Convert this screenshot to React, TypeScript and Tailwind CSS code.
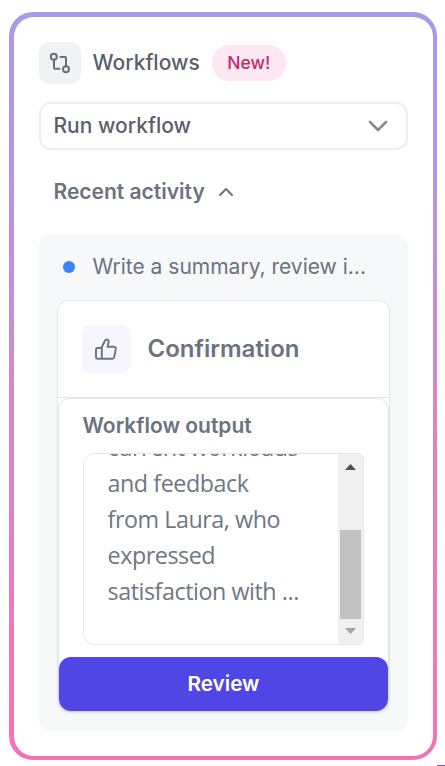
import React from 'react';
import { ChevronDown, ChevronUp } from 'lucide-react';

const WorkflowIcon = () => (
  <svg className="w-[22px] h-[22px]" viewBox="0 0 22 22" fill="none" stroke="#687080" strokeWidth="2" strokeLinecap="round" strokeLinejoin="round">
    <circle cx="4.8" cy="4.8" r="3" />
    <circle cx="17" cy="17.2" r="3" />
    <path d="M5 8v7.700a1 1 0 0 0 1 1h4.500" />
    <path d="M11.500 5H16a1 1 0 0 1 1 1v8" />
  </svg>
);

const ThumbIcon = () => (
  <svg className="w-6 h-6" viewBox="0 0 24 24" fill="none" stroke="#6b7280" strokeWidth="1.9" strokeLinecap="round" strokeLinejoin="round">
    <path d="M7.800 11v10.700H3.500a1.500 1.500 0 0 1-1.500-1.500v-7.700a1.500 1.500 0 0 1 1.500-1.500h2.800a1.500 1.500 0 0 0 1.500-1L11 3.800a1.900 1.900 0 0 1 3.600 1.200l-1 4.700h6.200a2 2 0 0 1 2 2.400l-1.600 8a2 2 0 0 1-2 1.600H7.800" />
  </svg>
);

const Scrollbar = () => (
  <div className="w-[25px] shrink-0 flex flex-col items-center bg-[#f0f0f0]">
    <svg className="w-[11px] h-[6px] mt-[10px]" viewBox="0 0 11 6">
      <path d="M5.500 0L11 6H0z" fill="#505050" />
    </svg>
    <div className="w-[21px] h-[89px] mt-[60px] bg-[#c1c1c1]" />
    <svg className="w-[11px] h-[6px] mt-[9px]" viewBox="0 0 11 6">
      <path d="M0 0h11L5.500 6z" fill="#a3a3a3" />
    </svg>
  </div>
);

const outputLines = ['current workloads', 'and feedback', 'from Laura, who', 'expressed', 'satisfaction with ...'];

const OutputBox = () => (
  <div className="w-[281px] h-[192px] mt-[12px] ml-[24px] flex justify-between border border-[#e5e7eb] rounded-l-[12px] rounded-r-[6px] overflow-hidden">
    <div className="-mt-[25px] pl-[23.500px] whitespace-nowrap font-['Open_Sans','Noto_Sans',sans-serif] text-[23.300px] leading-[36px] tracking-[-0.45px] text-[#6f7785]">
      {outputLines.map((line) => (
        <p key={line}>{line}</p>
      ))}
    </div>
    <Scrollbar />
  </div>
);

const ActivityCard = () => (
  <div className="w-[333px] mt-[18px] ml-[18px] bg-white border border-[#e5e7eb] rounded-[12px] shadow-xs">
    <div className="h-[97px] flex items-center pl-6 border-b border-[#e5e7eb]">
      <div className="w-12 h-12 flex items-center justify-center rounded-lg bg-[#f5f6ff]">
        <ThumbIcon />
      </div>
      <h3 className="ml-[17.500px] text-[24px] leading-8 font-semibold text-[#6b7280]">Confirmation</h3>
    </div>
    <div className="border-x border-t border-[#e5e7eb] rounded-[12px]">
      <h4 className="mt-[12px] mb-px ml-[23.500px] text-[21px] leading-[30px] font-semibold text-[#6b7280]">Workflow output</h4>
      <OutputBox />
      <button className="block w-full h-[54px] mt-[12px] rounded-[12px] bg-[#4f46e5] text-[20.700px] font-semibold text-white shadow-sm">Review</button>
    </div>
  </div>
);

export default function App() {
  return (
    <div className="relative h-[766px] w-[445px] pt-3 pl-[9px] overflow-hidden bg-white font-['Inter',sans-serif]">
      <div className="w-[428px] h-[748px] rounded-[24px] bg-linear-to-b from-[#a79ae8] to-[#f472b6] pt-[5px] pl-[5px] pr-1 pb-1">
        <div className="h-full rounded-[20px] bg-white pt-[25px] pl-[25px]">
          <div className="flex items-center h-[42px]">
            <div className="w-[42px] h-[42px] flex items-center justify-center rounded-[10px] bg-[#f0f2f3]">
              <WorkflowIcon />
            </div>
            <h2 className="ml-[11.500px] text-[21px] font-medium text-[#5a606b]">Workflows</h2>
            <span className="ml-3 w-[74px] h-9 flex items-center justify-center rounded-full bg-[#fce7f3] text-[17.500px] font-medium text-[#be2d68]">New!</span>
          </div>
          <button className="w-[369px] h-[48px] mt-[18px] flex items-center justify-between pl-[12.500px] pr-[12px] border-2 border-[#eceeef] rounded-[12px] text-[21px] font-medium text-[#5a606b]">
            Run workflow
            <ChevronDown size={32} strokeWidth={2} color="#848c99" />
          </button>
          <div className="h-[30px] mt-[27px] pl-[14.500px] flex items-center text-[21px] font-semibold text-[#6b7280]">
            Recent activity
            <ChevronUp className="ml-[9px]" size={24} strokeWidth={2} color="#6b7280" />
          </div>
          <div className="w-[369px] h-[497px] mt-[27px] pt-[18px] rounded-[12px] bg-[#f6f8f9]">
            <div className="h-[30px] flex items-center pl-6 text-[21px] text-[#6b7280]">
              <span className="w-3 h-3 mr-[17.500px] rounded-full bg-[#3b82f6]" />
              Write a summary, review i...
            </div>
            <ActivityCard />
          </div>
        </div>
      </div>
      <div className="absolute right-0 bottom-0 w-[8px] h-px bg-[#8f4fa8]" />
    </div>
  );
}
